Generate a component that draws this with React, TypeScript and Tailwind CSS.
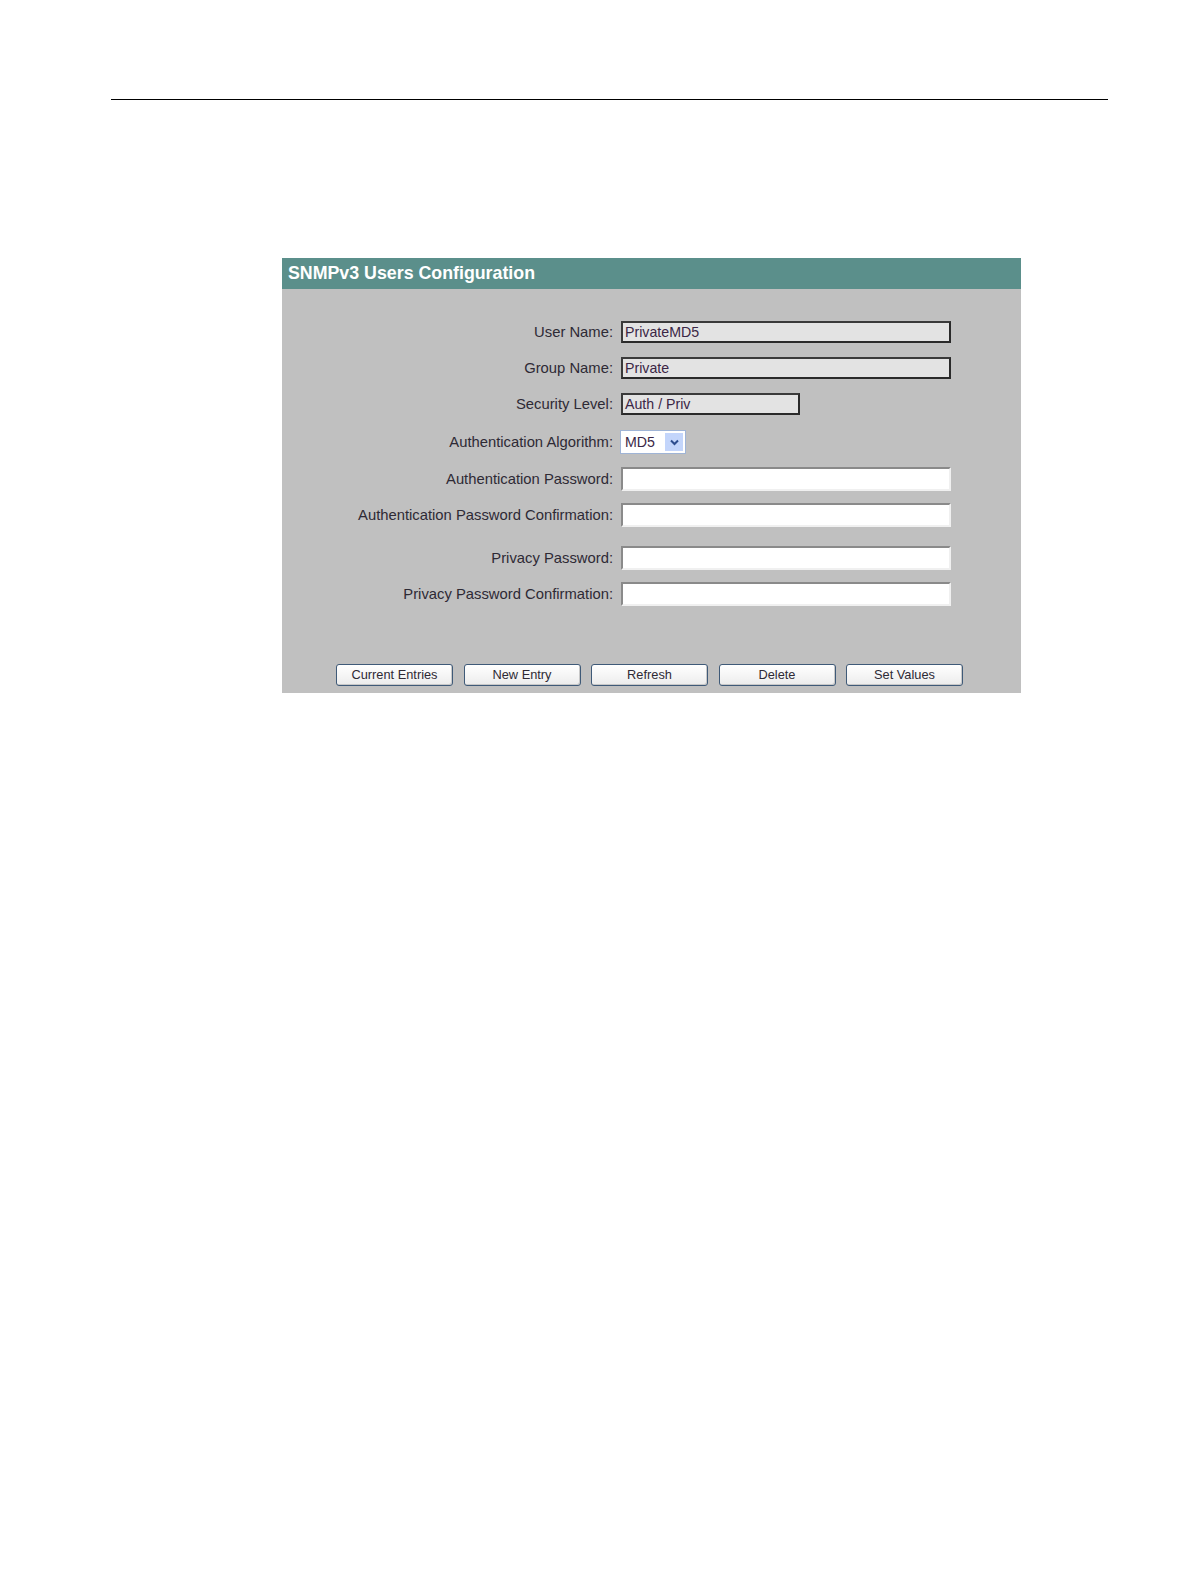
import React from "react";

const font = { fontFamily: '"Liberation Sans", Arial, sans-serif' };

function Label({ children }: { children: React.ReactNode }) {
  return (
    <div className="w-[339px] shrink-0 pr-[8px] text-right text-[14.8px] leading-none text-[#2e2a35]">
      {children}
    </div>
  );
}

function ReadOnlyBox({ value, w }: { value: string; w: string }) {
  return (
    <div
      className={`${w} h-[22px] flex items-center px-[2px] bg-[#e3e3e3] border-2 border-t-[#3a3a3a] border-l-[#3a3a3a] border-r-[#2a2a2a] border-b-[#2a2a2a] text-[14.2px] text-[#3b2746] leading-none`}
    >
      {value}
    </div>
  );
}

function PwBox() {
  return (
    <div className="w-[330px] h-[24px] bg-white border-2 border-t-[#8a8a8a] border-l-[#8a8a8a] border-r-[#f0f0f0] border-b-[#f0f0f0]" />
  );
}

function Btn({ children }: { children: React.ReactNode }) {
  return (
    <div className="w-[117px] h-[22px] flex items-center justify-center rounded-[3px] border border-[#3f5a78] bg-gradient-to-b from-[#ffffff] to-[#ececec] text-[12.8px] text-[#2e2a35] leading-none shadow-[inset_-1px_-1px_0_#c8c8c8]">
      {children}
    </div>
  );
}

export default function App() {
  return (
    <div className="w-[1191px] h-[1587px] bg-white relative" style={font}>
      <div className="pt-[99px] pl-[111px]">
        <div className="w-[997px] h-px bg-black" />
      </div>
      <div className="ml-[282px] mt-[158px] w-[739px] h-[435px] bg-[#c0c0c0] flex flex-col">
        <div className="h-[31px] bg-[#5b8f8b] flex items-center pl-[6px] text-white font-bold text-[17.8px] leading-none">
          SNMPv3 Users Configuration
        </div>
        <div className="flex items-center mt-[32px] h-[22px]">
          <Label>User Name:</Label>
          <ReadOnlyBox value="PrivateMD5" w="w-[330px]" />
        </div>
        <div className="flex items-center mt-[14px] h-[22px]">
          <Label>Group Name:</Label>
          <ReadOnlyBox value="Private" w="w-[330px]" />
        </div>
        <div className="flex items-center mt-[14px] h-[22px]">
          <Label>Security Level:</Label>
          <ReadOnlyBox value="Auth / Priv" w="w-[179px]" />
        </div>
        <div className="flex items-center mt-[15px] h-[24px]">
          <Label>Authentication Algorithm:</Label>
          <div className="-ml-px w-[66px] h-[24px] bg-white border border-[#9fb4d6] flex items-stretch">
            <div className="flex-1 flex items-center pl-[4px] text-[14.2px] text-[#3b2746] leading-none">MD5</div>
            <div className="w-[18px] m-[2px] bg-[#c3d5fb] flex items-center justify-center">
              <svg width="9" height="7" viewBox="0 0 9 7">
                <path d="M1 1.5 L4.5 5 L8 1.5" fill="none" stroke="#2d4d8e" strokeWidth="2" />
              </svg>
            </div>
          </div>
        </div>
        <div className="flex items-center mt-[13px] h-[24px]">
          <Label>Authentication Password:</Label>
          <PwBox />
        </div>
        <div className="flex items-center mt-[12px] h-[24px]">
          <Label>Authentication Password Confirmation:</Label>
          <PwBox />
        </div>
        <div className="flex items-center mt-[19px] h-[24px]">
          <Label>Privacy Password:</Label>
          <PwBox />
        </div>
        <div className="flex items-center mt-[12px] h-[24px]">
          <Label>Privacy Password Confirmation:</Label>
          <PwBox />
        </div>
        <div className="flex gap-[10.5px] pl-[54px] mt-[58px]">
          <Btn>Current Entries</Btn>
          <Btn>New Entry</Btn>
          <Btn>Refresh</Btn>
          <Btn>Delete</Btn>
          <Btn>Set Values</Btn>
        </div>
      </div>
    </div>
  );
}
